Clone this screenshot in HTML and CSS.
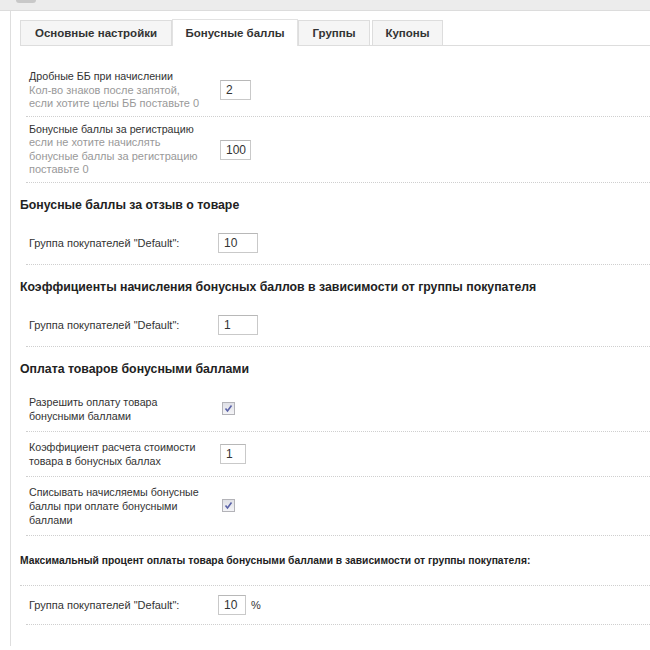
FILE: index.html
```html
<!DOCTYPE html>
<html lang="ru">
<head>
<meta charset="utf-8">
<title>Бонусные баллы</title>
<link rel="stylesheet" href="styles.css">
</head>
<body>
<div class="topbar"><span class="topbar-knob"></span></div>
<div class="panel">
  <div class="tabs">
    <div class="tab tab-1">Основные настройки</div>
    <div class="tab tab-active">Бонусные баллы</div>
    <div class="tab tab-3">Группы</div>
    <div class="tab tab-4">Купоны</div>
  </div>
  <div class="content">
    <div class="row row-top row-first">
      <div class="label">Дробные ББ при начислении<div class="hint">Кол-во знаков после запятой,<br>если хотите целы ББ поставьте 0</div></div>
      <div class="field"><span class="input w30">2</span></div>
    </div>
    <div class="row row-top">
      <div class="label">Бонусные баллы за регистрацию<div class="hint">если не хотите начислять<br>бонусные баллы за регистрацию<br>поставьте 0</div></div>
      <div class="field"><span class="input w30">100</span></div>
    </div>

    <h2 class="heading">Бонусные баллы за отзыв о товаре</h2>
    <div class="row row-input">
      <div class="label label-small">Группа покупателей "Default":</div>
      <div class="field"><span class="input w38">10</span></div>
    </div>

    <h2 class="heading">Коэффициенты начисления бонусных баллов в зависимости от группы покупателя</h2>
    <div class="row row-input">
      <div class="label label-small">Группа покупателей "Default":</div>
      <div class="field"><span class="input w38">1</span></div>
    </div>

    <h2 class="heading">Оплата товаров бонусными баллами</h2>
    <div class="row">
      <div class="label">Разрешить оплату товара<br>бонусными баллами</div>
      <div class="field"><span class="check"><svg width="9" height="9" viewBox="0 0 9 9"><path d="M1.5 4.5 L3.5 7 L7.5 1.5" fill="none" stroke="#5b63a8" stroke-width="1.6"/></svg></span></div>
    </div>
    <div class="row">
      <div class="label">Коэффициент расчета стоимости<br>товара в бонусных баллах</div>
      <div class="field"><span class="input w26">1</span></div>
    </div>
    <div class="row">
      <div class="label">Списывать начисляемы бонусные<br>баллы при оплате бонусными<br>баллами</div>
      <div class="field"><span class="check"><svg width="9" height="9" viewBox="0 0 9 9"><path d="M1.5 4.5 L3.5 7 L7.5 1.5" fill="none" stroke="#5b63a8" stroke-width="1.6"/></svg></span></div>
    </div>

    <div class="subheading">Максимальный процент оплаты товара бонусными баллами в зависимости от группы покупателя:</div>
    <div class="row row-input row-last">
      <div class="label label-small">Группа покупателей "Default":</div>
      <div class="field"><span class="input w28">10</span><span class="unit">%</span></div>
    </div>
  </div>
</div>
</body>
</html>
```
FILE: styles.css
```css
html, body {
  margin: 0;
  padding: 0;
  background: #ffffff;
}
body {
  font-family: "Liberation Sans", Arial, sans-serif;
  color: #333333;
  width: 650px;
  overflow: hidden;
}
.topbar {
  height: 10px;
  background: #ececec;
  border-bottom: 1px solid #dcdcdc;
  position: relative;
}
.topbar-knob {
  position: absolute;
  left: 16px;
  top: 0;
  width: 20px;
  height: 3px;
  background: #c8c8c8;
  border-radius: 0 0 6px 6px;
}
.panel {
  margin-left: 10px;
  border-left: 1px solid #dedede;
  padding: 8px 0 0 9px;
  height: 635px;
  box-sizing: border-box;
}
.tabs {
  display: flex;
  border-bottom: 1px solid #dddddd;
  height: 27px;
  box-sizing: border-box;
}
.tab {
  display: flex;
  align-items: center;
  justify-content: center;
  white-space: nowrap;
  height: 25px;
  margin-top: 1px;
  font-size: 11.5px;
  font-weight: bold;
  color: #333333;
  background: #f5f5f5;
  border: 1px solid #dddddd;
  border-bottom: none;
  box-sizing: border-box;
}
.tab-1 { width: 152px; }
.tab-active {
  width: 126px;
  height: 27px;
  margin-top: 0;
  background: #ffffff;
  border-color: #e2e2e2;
}
.tab-3 { width: 72px; }
.tab-4 { width: 71px; margin-left: 2px; }
.row {
  display: flex;
  align-items: center;
  border-bottom: 1px dotted #cfcfcf;
  margin-left: 6px;
  padding: 8px 0 8px 3px;
  font-size: 11px;
  line-height: 14px;
  color: #333333;
}
.row-top {
  padding: 6px 0 5px 3px;
  line-height: 13.5px;
}
.row-first {
  margin-top: 18px;
}
.row-input {
  padding: 10px 0 11px 3px;
}
.label {
  width: 191px;
  flex: none;
  font-size: 10.7px;
}
.hint {
  color: #999999;
  font-size: 11px;
}
.label-small {
  width: 189px;
  font-size: 11px;
}
.field {
  display: flex;
  align-items: center;
}
.input {
  display: inline-block;
  height: 20px;
  box-sizing: border-box;
  border: 1px solid #c9c9c9;
  border-top-color: #b8b8b8;
  padding-left: 5px;
  line-height: 18px;
  font-size: 12px;
  color: #333333;
  background: #ffffff;
}
.w30 { width: 31px; }
.w38 { width: 40px; }
.w26 { width: 26px; }
.w28 { width: 28px; }
.unit {
  margin-left: 5px;
  font-size: 11px;
}
.check {
  display: inline-flex;
  align-items: center;
  justify-content: center;
  width: 13px;
  height: 13px;
  box-sizing: border-box;
  margin-left: 2px;
  border: 1px solid #b3b3b8;
  background: linear-gradient(#dfe0e6, #f4f4f7);
}
.heading {
  margin: 0;
  padding: 14px 0 10px 0;
  font-size: 12.3px;
  line-height: 16px;
  font-weight: bold;
  color: #222222;
}
.subheading {
  padding: 18px 0 17px 0;
  font-size: 10.3px;
  line-height: 14px;
  font-weight: bold;
  color: #222222;
  border-bottom: 1px dotted #cfcfcf;
}
.row-last {
  padding: 9px 0 9px 3px;
}
```
